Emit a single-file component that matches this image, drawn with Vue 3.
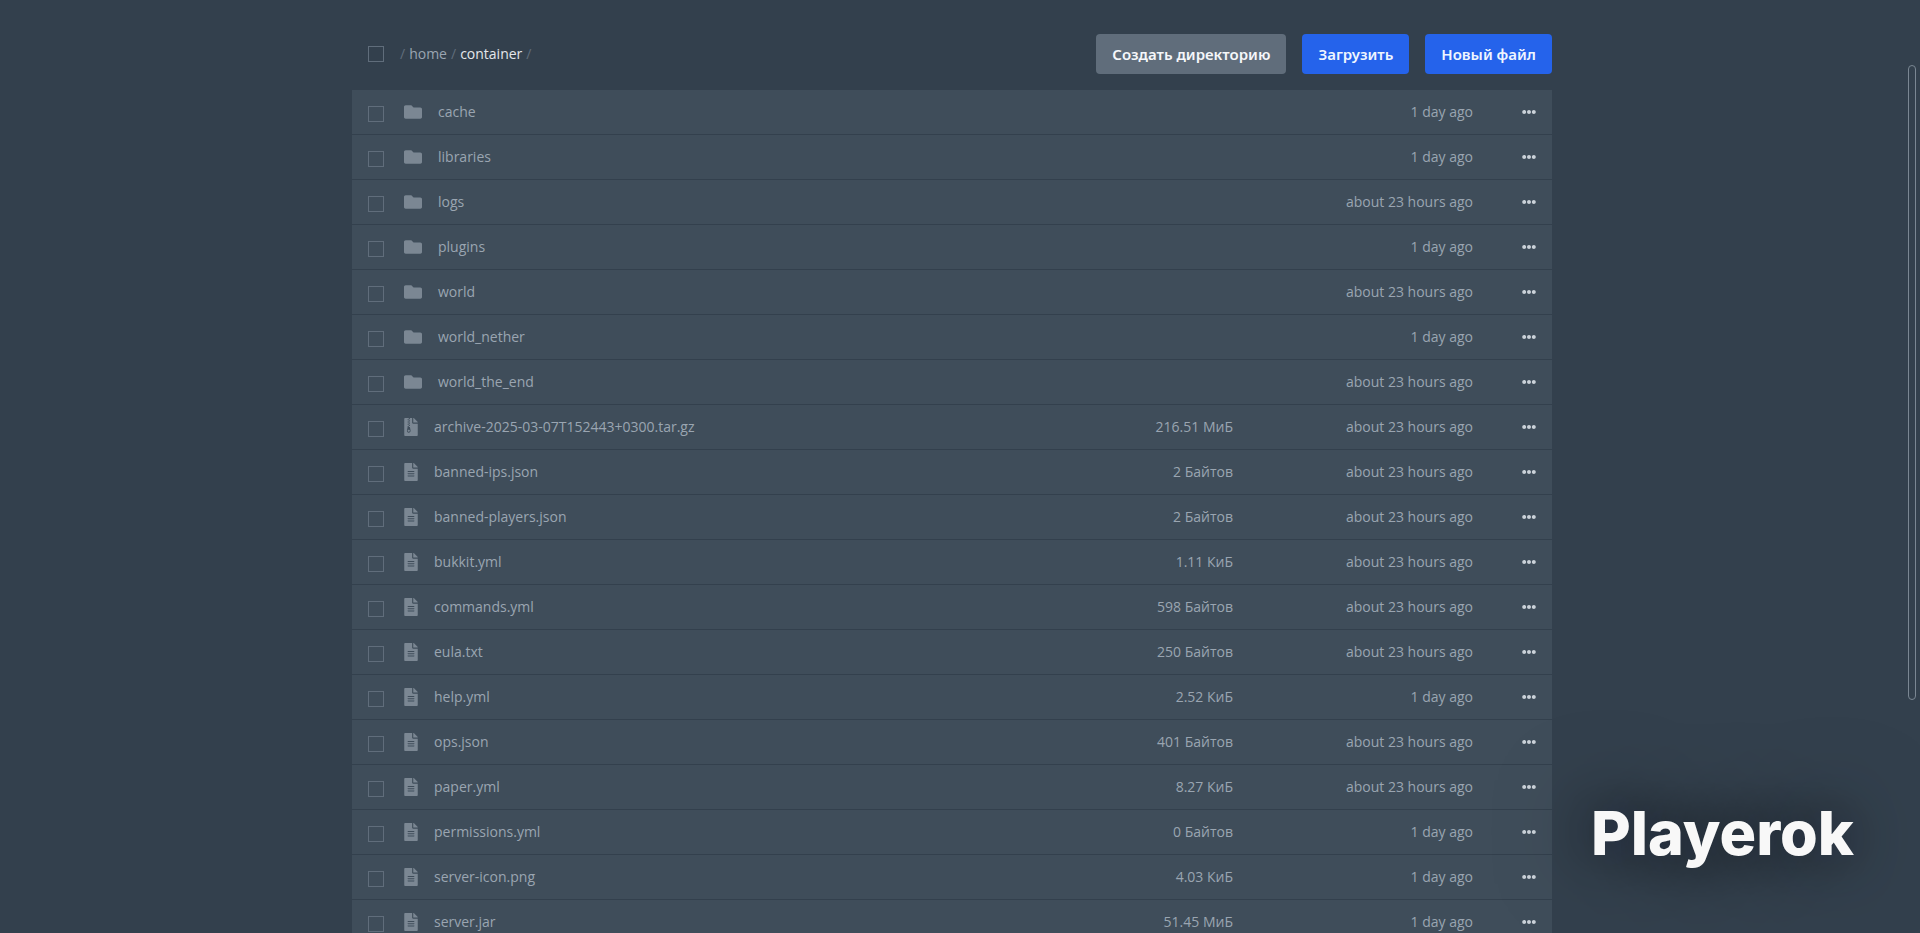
<template>
	<div class="page">
		<main class="content">
			<header class="toolbar">
				<input v-model="allSelected" type="checkbox" class="check" aria-label="Выбрать все" />
				<nav class="breadcrumbs">
					<span>/</span>
					<a href="#home">home</a>
					<span>/</span>
					<a href="#container" class="current">container</a>
					<span>/</span>
				</nav>
				<div class="actions">
					<button type="button" class="btn secondary">Создать директорию</button>
					<button type="button" class="btn">Загрузить</button>
					<button type="button" class="btn">Новый файл</button>
				</div>
			</header>

			<table class="files">
				<tbody>
					<tr v-for="file in files" :key="file.name">
						<td class="col-check">
							<input v-model="selected" :value="file.name" type="checkbox" class="check" :aria-label="file.name" />
						</td>
						<td>
							<a :href="'#' + file.name" class="file-link">
								<svg class="file-icon" :class="file.type" :viewBox="icons[file.type].viewBox" fill="currentColor">
									<path :d="icons[file.type].path" />
								</svg>
								<span>{{ file.name }}</span>
							</a>
						</td>
						<td class="col-size">{{ file.size }}</td>
						<td class="col-date">{{ file.modified }}</td>
						<td class="col-menu">
							<button type="button" class="menu-button" aria-label="Действия">
								<svg viewBox="0 0 512 512" fill="currentColor">
									<path d="M328 256c0 39.8-32.2 72-72 72s-72-32.2-72-72 32.2-72 72-72 72 32.2 72 72zm104-72c-39.8 0-72 32.2-72 72s32.2 72 72 72 72-32.2 72-72-32.2-72-72-72zm-352 0c-39.8 0-72 32.2-72 72s32.2 72 72 72 72-32.2 72-72-32.2-72-72-72z" />
								</svg>
							</button>
						</td>
					</tr>
				</tbody>
			</table>
		</main>

		<div class="scroll-thumb"></div>
		<div class="brand">Playerok</div>
	</div>
</template>

<script setup>
import { ref, computed } from "vue"

const DAY = "1 day ago"
const HOURS = "about 23 hours ago"

const icons = {
	folder: {
		viewBox: "0 0 512 512",
		path: "M464 128H272l-64-64H48C21.49 64 0 85.49 0 112v288c0 26.51 21.49 48 48 48h416c26.51 0 48-21.49 48-48V176c0-26.51-21.49-48-48-48z"
	},
	file: {
		viewBox: "0 0 384 512",
		path: "M224 136V0H24C10.7 0 0 10.7 0 24v464c0 13.3 10.7 24 24 24h336c13.3 0 24-10.7 24-24V160H248c-13.2 0-24-10.8-24-24zm64 236c0 6.6-5.4 12-12 12H108c-6.6 0-12-5.4-12-12v-8c0-6.6 5.4-12 12-12h168c6.6 0 12 5.4 12 12v8zm0-64c0 6.6-5.4 12-12 12H108c-6.6 0-12-5.4-12-12v-8c0-6.6 5.4-12 12-12h168c6.6 0 12 5.4 12 12v8zm0-72v8c0 6.6-5.4 12-12 12H108c-6.6 0-12-5.4-12-12v-8c0-6.6 5.4-12 12-12h168c6.6 0 12 5.4 12 12zm96-114.1v6.1H256V0h6.1c6.4 0 12.5 2.5 17 7l97.9 98c4.5 4.5 7 10.6 7 16.9z"
	},
	archive: {
		viewBox: "0 0 384 512",
		path: "M377 105L279.1 7c-4.5-4.5-10.6-7-17-7H256v128h128v-6.1c0-6.3-2.5-12.4-7-16.9zM128.4 336c-17.9 0-32.4 12.1-32.4 27 0 15 14.6 27 32.5 27s32.4-12.1 32.4-27-14.6-27-32.5-27zM224 136V0h-63.6v32h-32V0H24C10.7 0 0 10.7 0 24v464c0 13.3 10.7 24 24 24h336c13.3 0 24-10.7 24-24V160H248c-13.2 0-24-10.8-24-24zM95.9 32h32v32h-32zm32.3 384c-33.2 0-58-30.4-51.4-62.9L96.4 256v-32h32v-32h-32v-32h32v-32h-32V96h32V64h32v32h-32v32h32v32h-32v32h32v32h-32v32h22.1c5.7 0 10.7 4.1 11.8 9.7l17.3 87.7c6.4 32.4-18.4 62.6-51.4 62.6z"
	}
}

const files = [
	{ name: "cache", type: "folder", modified: DAY },
	{ name: "libraries", type: "folder", modified: DAY },
	{ name: "logs", type: "folder", modified: HOURS },
	{ name: "plugins", type: "folder", modified: DAY },
	{ name: "world", type: "folder", modified: HOURS },
	{ name: "world_nether", type: "folder", modified: DAY },
	{ name: "world_the_end", type: "folder", modified: HOURS },
	{ name: "archive-2025-03-07T152443+0300.tar.gz", type: "archive", size: "216.51 МиБ", modified: HOURS },
	{ name: "banned-ips.json", type: "file", size: "2 Байтов", modified: HOURS },
	{ name: "banned-players.json", type: "file", size: "2 Байтов", modified: HOURS },
	{ name: "bukkit.yml", type: "file", size: "1.11 КиБ", modified: HOURS },
	{ name: "commands.yml", type: "file", size: "598 Байтов", modified: HOURS },
	{ name: "eula.txt", type: "file", size: "250 Байтов", modified: HOURS },
	{ name: "help.yml", type: "file", size: "2.52 КиБ", modified: DAY },
	{ name: "ops.json", type: "file", size: "401 Байтов", modified: HOURS },
	{ name: "paper.yml", type: "file", size: "8.27 КиБ", modified: HOURS },
	{ name: "permissions.yml", type: "file", size: "0 Байтов", modified: DAY },
	{ name: "server-icon.png", type: "file", size: "4.03 КиБ", modified: DAY },
	{ name: "server.jar", type: "file", size: "51.45 МиБ", modified: DAY }
]

const selected = ref([])

const allSelected = computed({
	get: () => selected.value.length === files.length,
	set: (value) => {
		selected.value = value ? files.map(f => f.name) : []
	}
})
</script>

<style>
body {
	background: #33404d;
}
</style>

<style scoped>
.page {
	box-sizing: border-box;
	height: 100vh;
	/* right side is the scroll gutter */
	padding: 34px 16px 0 0;
	overflow: hidden;
	background: #33404d;
	color: #9aa5b1;
	font-family: "Segoe UI", "Open Sans", "Noto Sans", sans-serif;
	font-size: 14px;
	line-height: 20px;
}

.content {
	max-width: 1200px;
	margin: 0 auto;
}

.toolbar {
	display: flex;
	align-items: center;
	padding-left: 16px;
	margin-bottom: 16px;
}

.check {
	appearance: none;
	display: block;
	flex-shrink: 0;
	box-sizing: border-box;
	width: 16px;
	height: 16px;
	margin: 0;
	border: 1px solid #606d7b;
	cursor: pointer;
}

.check:checked {
	background: #2563eb;
	border-color: #2563eb;
}

.breadcrumbs {
	display: flex;
	gap: 4px;
	margin-left: 16px;
	color: #606d7b;
}

.breadcrumbs a {
	color: #9aa5b1;
	text-decoration: none;
}

.breadcrumbs a.current {
	color: #e4e7eb;
}

.actions {
	display: flex;
	gap: 16px;
	margin-left: auto;
}

.btn {
	height: 40px;
	padding: 0 16px;
	border: none;
	border-radius: 4px;
	background: #2563eb;
	color: #eff6ff;
	font-family: "Segoe UI", "Noto Sans", sans-serif;
	font-size: 15px;
	font-weight: 600;
	line-height: 20px;
	cursor: pointer;
}

.btn.secondary {
	background: #606d7b;
	color: #f5f7fa;
}

.files {
	width: 100%;
	border-collapse: separate;
	border-spacing: 0;
}

.files td {
	height: 44px;
	padding: 0;
	background: #3f4d5a;
	border-bottom: 1px solid #33404d;
}

.col-check {
	width: 52px;
}

.col-check .check {
	margin: 4px 0 0 16px;
}

.file-link {
	display: flex;
	align-items: center;
	gap: 16px;
	color: inherit;
	text-decoration: none;
}

.file-icon {
	width: 14px;
	height: 18px;
	color: #7b8793;
}

.file-icon.folder {
	width: 18px;
}

.col-size {
	width: 120px;
	text-align: right;
}

.col-date {
	width: 240px;
	text-align: right;
}

.col-menu {
	width: 79px;
}

.menu-button {
	display: block;
	margin: 0 16px 0 auto;
	padding: 0;
	border: none;
	background: none;
	color: #cbd2d9;
	cursor: pointer;
}

.menu-button svg {
	display: block;
	width: 14px;
	height: 14px;
}

.scroll-thumb {
	position: fixed;
	top: 7vh;
	right: 4px;
	box-sizing: border-box;
	width: 8px;
	height: 68vh;
	border: 1px solid #7b8793;
	border-radius: 4px;
}

.brand {
	position: fixed;
	right: 66px;
	bottom: 62px;
	color: #f8f8f8;
	font-family: Inter, sans-serif;
	font-size: 61px;
	font-weight: 800;
	line-height: 76px;
	text-shadow: 0 0 96px rgba(36, 42, 54, 0.7), 0 0 56px rgba(36, 42, 54, 0.6);
}
</style>
